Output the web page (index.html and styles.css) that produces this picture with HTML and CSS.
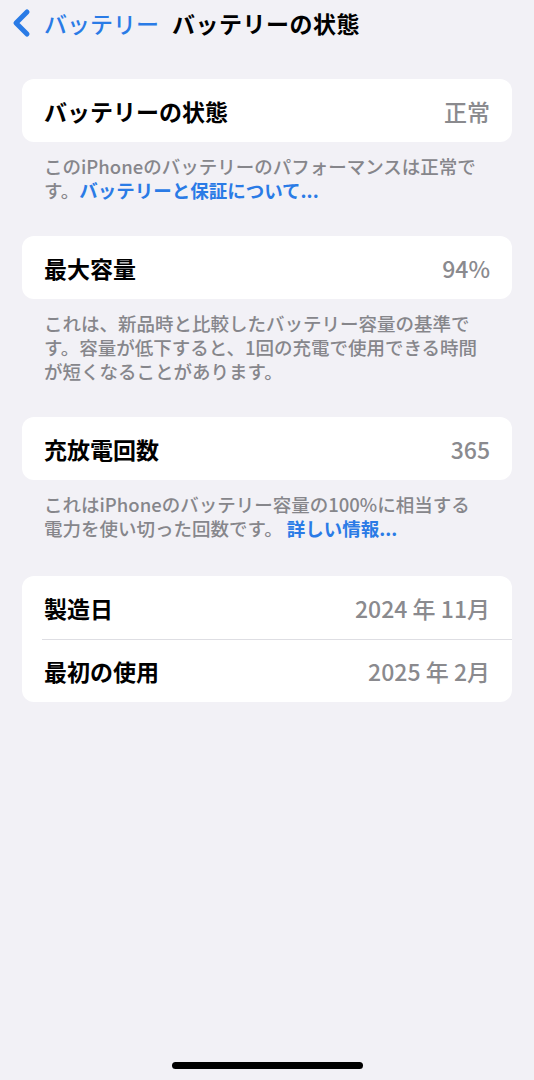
FILE: index.html
```html
<!DOCTYPE html>
<html lang="ja">
<head>
    <meta charset="UTF-8">
    <meta name="viewport" content="width=device-width, initial-scale=1.0">
    <title>バッテリーの状態</title>
    <link rel="stylesheet" href="styles.css">
</head>
<body>

    <div class="screen">
        <div class="nav">
            <a class="back" href="#">
                <svg class="chevron" width="22" height="30" viewBox="0 0 22 30">
                    <path d="M17 4 L6 15 L17 26" fill="none" stroke="#2a7be6" stroke-width="5" stroke-linecap="round" stroke-linejoin="round"/>
                </svg>
                <span>バッテリー</span>
            </a>
            <h1>バッテリーの状態</h1>
        </div>

        <div class="group">
            <div class="card">
                <div class="row">
                    <span class="label">バッテリーの状態</span>
                    <span class="value">正常</span>
                </div>
            </div>
            <p class="footer">このiPhoneのバッテリーのパフォーマンスは正常で<br>す。<a href="#">バッテリーと保証について...</a></p>
        </div>

        <div class="group">
            <div class="card">
                <div class="row">
                    <span class="label">最大容量</span>
                    <span class="value">94%</span>
                </div>
            </div>
            <p class="footer">これは、新品時と比較したバッテリー容量の基準で<br>す。容量が低下すると、1回の充電で使用できる時間<br>が短くなることがあります。</p>
        </div>

        <div class="group">
            <div class="card">
                <div class="row">
                    <span class="label">充放電回数</span>
                    <span class="value">365</span>
                </div>
            </div>
            <p class="footer">これはiPhoneのバッテリー容量の100%に相当する<br>電力を使い切った回数です。 <a href="#">詳しい情報...</a></p>
        </div>

        <div class="group last">
            <div class="card">
                <div class="row">
                    <span class="label">製造日</span>
                    <span class="value">2024 年 11月</span>
                </div>
                <div class="row">
                    <span class="label">最初の使用</span>
                    <span class="value">2025 年 2月</span>
                </div>
            </div>
        </div>

        <div class="home-bar"></div>
    </div>

</body>
</html>
```

FILE: styles.css
```css
body {
    margin: 0;
    background-color: #f2f1f6;
    font-family: 'Noto Sans CJK JP', 'Noto Sans', sans-serif;
    color: #000;
}
.screen {
    min-height: 1080px;
    display: flex;
    flex-direction: column;
}
.nav {
    height: 46px;
    display: flex;
    align-items: center;
    padding-left: 10px;
}
.back {
    display: flex;
    align-items: center;
    gap: 12px;
    color: #2a7be6;
    text-decoration: none;
    font-size: 23px;
    font-weight: 500;
}
.chevron {
    display: block;
}
h1 {
    margin: 0 0 0 13px;
    font-size: 23px;
    font-weight: 700;
    letter-spacing: 0.5px;
}
.group {
    margin-top: 34px;
}
.nav + .group {
    margin-top: 33px;
}
.group.last {
    margin-top: 36px;
}
.card {
    margin: 0 22px;
    background: white;
    border-radius: 12px;
    overflow: hidden;
}
.row {
    height: 63px;
    display: flex;
    align-items: center;
    justify-content: space-between;
    padding: 0 22px;
    font-size: 23px;
}
.row + .row {
    height: 62px;
    border-top: 1px solid #dedee3;
    margin-left: 20px;
    padding-left: 2px;
}
.label {
    font-weight: 700;
}
.value {
    color: #8a8a8e;
    font-weight: 500;
}
.footer {
    margin: 12px 0 0;
    padding: 0 30px 0 44px;
    font-size: 18.5px;
    line-height: 24px;
    color: #86868b;
    font-weight: 500;
    white-space: nowrap;
}
.footer a {
    color: #2a7be6;
    text-decoration: none;
    font-weight: 700;
}
.home-bar {
    width: 191px;
    height: 7px;
    border-radius: 4px;
    background: #000;
    margin: auto auto 11px;
}
```
